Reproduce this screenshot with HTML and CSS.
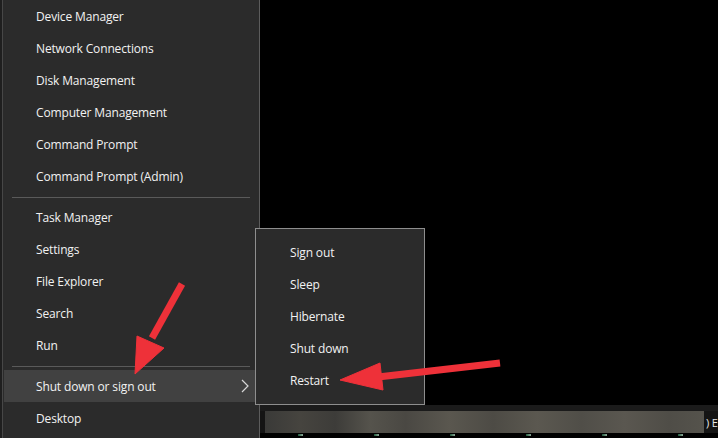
FILE: index.html
```html
<!DOCTYPE html>
<html>
<head>
<meta charset="utf-8">
<link rel="stylesheet" href="styles.css">
</head>
<body>
<div class="screen">
  <div class="edge">
    <nav class="menu">
      <div class="item">Device Manager</div>
      <div class="item">Network Connections</div>
      <div class="item">Disk Management</div>
      <div class="item">Computer Management</div>
      <div class="item">Command Prompt</div>
      <div class="item">Command Prompt (Admin)</div>
      <div class="sep"></div>
      <div class="item">Task Manager</div>
      <div class="item">Settings</div>
      <div class="item">File Explorer</div>
      <div class="item">Search</div>
      <div class="item">Run</div>
      <div class="sep"></div>
      <div class="item active">Shut down or sign out
        <svg class="chev" width="8" height="14" viewBox="0 0 8 14"><path d="M1 1 L7 7 L1 13" fill="none" stroke="#d8d8d8" stroke-width="1.2"/></svg>
      </div>
      <div class="item">Desktop</div>
    </nav>
  </div>
  <div class="desk">
    <div class="void"></div>
    <div class="bottom">
      <div class="band"></div>
      <div class="strip-row">
        <div class="strip"></div>
        <span class="peek">) E</span>
      </div>
      <div class="dots">
        <i></i><i></i><i></i><i></i><i></i><i></i>
      </div>
    </div>
  </div>

  <div class="submenu">
    <div class="sitem">Sign out</div>
    <div class="sitem">Sleep</div>
    <div class="sitem">Hibernate</div>
    <div class="sitem">Shut down</div>
    <div class="sitem">Restart</div>
  </div>

  <svg class="arrows" width="718" height="438" viewBox="0 0 718 438">
    <g fill="#ee3139" stroke="#ee3139" stroke-linejoin="round">
      <line x1="182" y1="284" x2="152" y2="338" stroke-width="7" stroke-linecap="butt"/>
      <polygon points="137,336 164,348 135,374" stroke-width="1"/>
      <line x1="500" y1="363" x2="378" y2="377" stroke-width="7"/>
      <polygon points="380,363 383,390 340,380" stroke-width="1"/>
    </g>
  </svg>
</div>
</body>
</html>
```

FILE: styles.css
```css
html, body {
  margin: 0;
  padding: 0;
  background: #000;
}
.screen {
  position: relative;
  width: 718px;
  height: 438px;
  overflow: hidden;
  display: flex;
  font-family: "Open Sans", "Noto Sans", sans-serif;
  font-size: 12px;
  letter-spacing: -0.15px;
  color: #f2f2f2;
}
.edge {
  background: #1f1f1f;
  padding-left: 2px;
  display: flex;
}
.menu {
  width: 256px;
  background: #2b2b2b;
  border-left: 1px solid #474747;
  border-right: 1px solid #5c5c5c;
  display: flex;
  flex-direction: column;
}
.item {
  position: relative;
  height: 32px;
  display: flex;
  align-items: center;
  padding-left: 32px;
  margin: 0 3px 0 1px;
  white-space: nowrap;
}
.item.active {
  background: #414141;
}
.chev {
  position: absolute;
  right: 7px;
  top: 9px;
}
.sep {
  height: 1px;
  background: #5a5a5a;
  margin: 5px 9px 3px 9px;
}
.desk {
  flex: 1;
  display: flex;
  flex-direction: column;
}
.void {
  flex: 1;
  background: #000;
}
.bottom {
  height: 33px;
  display: flex;
  flex-direction: column;
}
.band {
  height: 6px;
  background: #1b1b1b;
}
.strip-row {
  height: 22px;
  display: flex;
  align-items: center;
  background: #141414;
  padding-left: 5px;
}
.strip {
  flex: 1;
  height: 22px;
  background: linear-gradient(90deg, #3a3a38 0%, #46443f 8%, #3d3c39 16%, #55534c 24%, #4a4843 32%, #5a574f 42%, #4d4b45 52%, #5b5850 62%, #504e48 72%, #5a5750 82%, #4f4d47 92%, #55534c 100%);
}
.peek {
  width: 12px;
  font-size: 11px;
  color: #e8e8e8;
  padding-left: 2px;
  overflow: hidden;
  white-space: nowrap;
}
.dots {
  flex: 1;
  display: flex;
  gap: 71px;
  padding-left: 38px;
  background: #000;
  align-items: flex-end;
}
.dots i {
  width: 5px;
  height: 2px;
  margin-bottom: 2px;
  background: linear-gradient(90deg, #1f5a3c, #8fa898);
}
.submenu {
  position: absolute;
  left: 255px;
  top: 228px;
  width: 168px;
  padding: 7px 0 8px;
  background: #2b2b2b;
  border: 1px solid #8e8e8e;
  display: flex;
  flex-direction: column;
}
.sitem {
  height: 32px;
  display: flex;
  align-items: center;
  padding-left: 34px;
}
.arrows {
  position: absolute;
  left: 0;
  top: 0;
  pointer-events: none;
}
```
